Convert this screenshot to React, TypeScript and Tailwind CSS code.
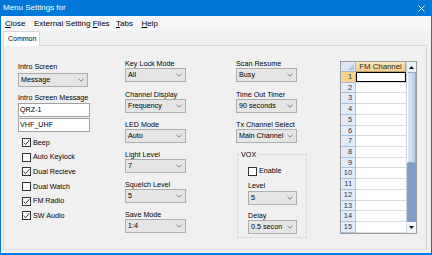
import React from 'react';

function Chevron() {
  return (
    <svg width="6" height="4" viewBox="0 0 6 4">
      <polyline points="0.5,0.8 3,3.2 5.5,0.8" fill="none" stroke="#606060" strokeWidth="0.8" />
    </svg>
  );
}

function Combo({ value, className }: { value: string; className: string }) {
  return (
    <div className={`${className} h-[14px] flex items-center bg-[#e5e5e5] border border-[#adadad] text-[7.2px] leading-[8px] text-black`}>
      <div className="flex-1 min-w-0 overflow-hidden whitespace-nowrap pl-[2px]">{value}</div>
      <div className="w-[12px] h-full flex items-center justify-center shrink-0">
        <Chevron />
      </div>
    </div>
  );
}

function Label({ text, className = '' }: { text: string; className?: string }) {
  return <div className={`h-[8px] text-[7.2px] leading-[8px] text-black whitespace-nowrap ${className}`}>{text}</div>;
}

function Check({ checked, label, className = '' }: { checked: boolean; label: string; className?: string }) {
  return (
    <div className={`h-[14.6px] flex items-center gap-[2px] ${className}`}>
      <div className="w-[9px] h-[9px] border border-[#333333] bg-white shrink-0 flex items-center justify-center">
        {checked && (
          <svg width="7" height="7" viewBox="0 0 7 7">
            <polyline points="0.8,3.6 2.7,5.6 6.3,1.2" fill="none" stroke="#222" strokeWidth="0.9" />
          </svg>
        )}
      </div>
      <span className="text-[7.2px] leading-[8px] text-black whitespace-nowrap">{label}</span>
    </div>
  );
}

function Group({ label, value, className = '' }: { label: string; value: string; className?: string }) {
  return (
    <div className={`flex flex-col ${className}`}>
      <Label text={label} />
      <Combo value={value} className="w-[61px]" />
    </div>
  );
}

export default function App() {
  const rows = Array.from({ length: 15 }, (_, i) => i + 1);
  return (
    <div className="w-[432px] h-[255px] bg-[#f0f0f0] font-['Liberation_Sans',Arial,sans-serif] flex flex-col border-x border-b-2 border-[#0078d7] overflow-hidden">
      {/* title bar */}
      <div className="h-[16px] shrink-0 bg-[#0078d7] flex items-center justify-between pl-[2px] pr-[6px] text-white text-[8px] leading-[16px]">
        <span>Menu Settings for</span>
        <svg width="7" height="7" viewBox="0 0 7 7">
          <path d="M0.5 0.5L6.5 6.5M6.5 0.5L0.5 6.5" stroke="white" strokeWidth="0.9" />
        </svg>
      </div>
      {/* menu bar */}
      <div className="h-[15px] shrink-0 bg-[#f5f6f7] flex items-center pl-[4px] text-[8px] leading-[15px] text-black">
        <span className="w-[29px]"><u>C</u>lose</span>
        <span className="w-[82px]">External Setting <u>F</u>iles</span>
        <span className="w-[25.4px]"><u>T</u>abs</span>
        <span><u>H</u>elp</span>
      </div>
      {/* tab strip */}
      <div className="h-[14px] shrink-0 flex items-start pl-[2px]">
        <div className="relative z-10 w-[37px] h-[15px] bg-white border-x border-t border-[#d9d9d9] pl-[4px] pt-[3px] text-[7px] leading-[8px] text-black">
          Common
        </div>
      </div>
      {/* tab page */}
      <div className="flex-1 ml-[2px] mr-[4px] mb-[3px] border border-[#d9d9d9] bg-[#f0f0f0] flex pl-[14px]">
        {/* column 1 */}
        <div className="w-[107px] flex flex-col">
          <Label text="Intro Screen" className="mt-[17px]" />
          <Combo value="Message" className="w-[70px] mt-[2px]" />
          <Label text="Intro Screen Message" className="mt-[7px]" />
          <div className="w-[72px] h-[14px] mt-[0.5px] bg-white border border-[#a0a0a0] pl-[1px] text-[7.2px] leading-[12px] text-black">QRZ-1</div>
          <div className="w-[72px] h-[14px] mt-[1px] bg-white border border-[#a0a0a0] pl-[1px] text-[7.2px] leading-[12px] text-black">VHF_UHF</div>
          <div className="flex flex-col mt-[4px] pl-[4px]">
            <Check checked label="Beep" />
            <Check checked={false} label="Auto Keylock" />
            <Check checked label="Dual Recieve" />
            <Check checked={false} label="Dual Watch" />
            <Check checked label="FM Radio" />
            <Check checked label="SW Audio" />
          </div>
        </div>
        {/* column 2 */}
        <div className="w-[111px] flex flex-col">
          <Group label="Key Lock Mode" value="All" className="mt-[13.7px]" />
          <Group label="Channel Display" value="Frequency" className="mt-[9px]" />
          <Group label="LED Mode" value="Auto" className="mt-[8px]" />
          <Group label="Light Level" value="7" className="mt-[8px]" />
          <Group label="Squelch Level" value="5" className="mt-[8px]" />
          <Group label="Save Mode" value="1:4" className="mt-[8px]" />
        </div>
        {/* column 3 */}
        <div className="w-[104px] flex flex-col">
          <Group label="Scan Resume" value="Busy" className="mt-[13.7px]" />
          <Group label="Time Out Timer" value="90 seconds" className="mt-[9px]" />
          <Group label="Tx Channel Select" value="Main Channel" className="mt-[8px]" />
          <fieldset className="w-[70px] h-[87px] ml-[1px] mt-[8px] border border-[#dcdcdc]">
            <legend className="ml-[2px] px-[1px] text-[7.2px] leading-[8px] text-black">VOX</legend>
            <div className="flex flex-col pl-[10px]">
              <Check checked={false} label="Enable" className="mt-[5.2px]" />
              <Label text="Level" className="mt-[4px]" />
              <Combo value="5" className="w-[49px] mt-[0.5px]" />
              <Label text="Delay" className="mt-[7px]" />
              <Combo value="0.5 secon" className="w-[49px]" />
            </div>
          </fieldset>
        </div>
        {/* grid */}
        <div className="mt-[15px] w-[77px] h-[173px] border border-[#9a9a9a] flex bg-white">
          <div className="w-[65px] flex flex-col">
            <div className="h-[10px] flex shrink-0">
              <div className="relative w-[15px] h-full bg-[#dce6f4] border-r border-b border-[#9eb6ce]">
                <svg className="absolute right-[1px] bottom-[1px]" width="6" height="6" viewBox="0 0 6 6">
                  <polygon points="6,0 6,6 0,6" fill="#b4c6de" />
                </svg>
              </div>
              <div className="w-[50px] h-full bg-gradient-to-b from-[#fbe6bd] to-[#f6d18e] border-r border-b border-[#b9a07a] text-[7.8px] leading-[9px] text-[#1e1e1e] text-center whitespace-nowrap">
                FM Channel
              </div>
            </div>
            {rows.map((n) => (
              <div key={n} className="h-[10.73px] flex shrink-0">
                <div
                  className={`w-[15px] h-full border-r border-b border-[#a9bfd8] text-right pr-[3px] text-[7.4px] leading-[10px] text-[#243650] ${
                    n === 1 ? 'bg-[#f9d28e]' : 'bg-[#e3ebf7]'
                  }`}
                >
                  {n}
                </div>
                <div className="w-[50px] h-full border-b border-[#dcdcdc]">
                  {n === 1 && <div className="w-full h-full border border-black" />}
                </div>
              </div>
            ))}
          </div>
          {/* scrollbar */}
          <div className="w-[10px] flex flex-col border-l border-[#c9d6e6]">
            <div className="h-[10px] shrink-0 bg-[#eaf0f9] flex items-center justify-center">
              <svg width="5" height="3" viewBox="0 0 5 3">
                <polygon points="0,3 5,3 2.5,0" fill="#111" />
              </svg>
            </div>
            <div className="h-[91px] shrink-0 bg-gradient-to-r from-[#dde8f6] to-[#b9cde8] border border-[#8eaad2] border-l-white" />
            <div className="flex-1 bg-[#7f9ec9]" />
            <div className="h-[11px] shrink-0 bg-[#f2f6fb] flex items-center justify-center">
              <svg width="5" height="3" viewBox="0 0 5 3">
                <polygon points="0,0 5,0 2.5,3" fill="#111" />
              </svg>
            </div>
          </div>
        </div>
      </div>
    </div>
  );
}
